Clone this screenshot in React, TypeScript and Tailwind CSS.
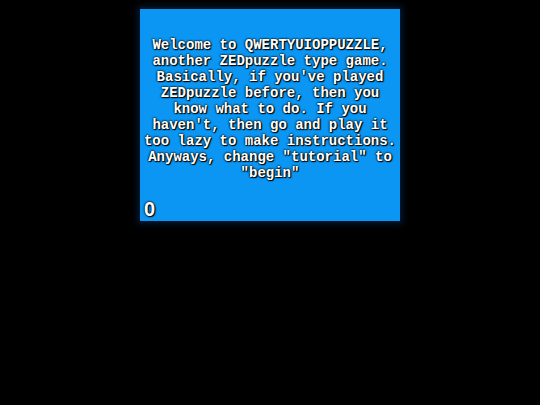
const lines = [
  'Welcome to QWERTYUIOPPUZZLE,',
  'another ZEDpuzzle type game.',
  "Basically, if you've played",
  'ZEDpuzzle before, then you',
  'know what to do. If you',
  "haven't, then go and play it",
  'too lazy to make instructions.',
  'Anyways, change "tutorial" to',
  '"begin"',
];

export default function App() {
  return (
    <div className="min-h-[405px] w-[540px] bg-black pt-[9px]">
      <div className="mx-auto flex h-[212px] w-[260px] flex-col bg-[#0a96f2] shadow-[0_0_6px_3px_rgba(0,40,80,0.6)]">
        <p
          className="mt-[28px] text-center text-[14px] font-bold leading-[16px] whitespace-pre text-white [text-shadow:0_0_2px_#000,0_0_2px_#000,1px_1px_1px_#000]"
          style={{ fontFamily: '"Liberation Mono", "DejaVu Sans Mono", monospace' }}
        >
          {lines.map((l, i) => (
            <span key={i} className="block">
              {l}
            </span>
          ))}
        </p>
        <div
          className="mt-auto mb-0 pl-[4px] text-[20px] font-bold leading-[24px] text-white [text-shadow:0_0_2px_#000,0_0_2px_#000,1px_1px_1px_#000]"
          style={{ fontFamily: '"Liberation Sans", Arial, sans-serif' }}
        >
          0
        </div>
      </div>
    </div>
  );
}
